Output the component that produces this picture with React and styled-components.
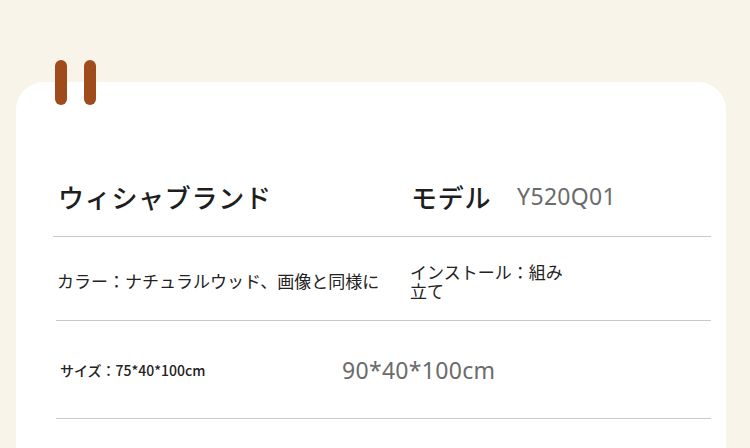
import styled, { createGlobalStyle } from 'styled-components';

const GlobalStyle = createGlobalStyle`
  html, body {
    margin: 0;
    padding: 0;
    background: #f9f4ea;
    overflow: hidden;
  }
  body {
    font-family: "Noto Sans CJK JP", "Noto Sans", sans-serif;
  }
`;

const Page = styled.div`
  width: 750px;
  height: 448px;
  padding: 82px 24px 0 16px;
  box-sizing: border-box;
  overflow: hidden;
`;

const Card = styled.section`
  position: relative;
  background: #ffffff;
  border-radius: 28px 28px 0 0;
  min-height: 400px;
  padding: 0 15px 0 37px;
`;

const Binder = styled.div`
  position: absolute;
  top: -22px;
  left: 39px;
  display: flex;
  gap: 17px;
`;

const Ring = styled.span`
  display: block;
  width: 12px;
  height: 45px;
  border-radius: 6px;
  background: #a04b1c;
`;

const Row = styled.div`
  display: flex;
  align-items: center;
  box-sizing: border-box;
  height: ${p => p.$h}px;
  padding-top: ${p => p.$pt || 0}px;
  padding-left: ${p => p.$pl}px;
  margin-left: ${p => p.$inset || 0}px;
  border-bottom: 1px solid #c9c9c9;
`;

const Cell = styled.div`
  display: flex;
  align-items: center;
  flex: 0 0 auto;
  width: ${p => (p.$w ? `${p.$w}px` : 'auto')};
`;

const Heading = styled.span`
  font-size: 26px;
  font-weight: 500;
  letter-spacing: 0.7px;
  color: #1e1e1e;
  line-height: 1.3;
`;

const Label = styled.span`
  font-size: ${p => p.$size}px;
  font-weight: ${p => p.$weight || 400};
  color: #222;
  line-height: ${p => p.$lh || 1.3};
`;

const Value = styled.span`
  font-family: "Noto Sans", sans-serif;
  font-size: 23px;
  font-weight: 400;
  letter-spacing: 0.3px;
  color: #6b6b6b;
  line-height: 1.3;
  margin-left: ${p => p.$ml || 0}px;
`;

export default function App() {
  return (
    <>
      <GlobalStyle />
      <Page>
        <Card>
          <Binder>
            <Ring />
            <Ring />
          </Binder>

          <Row $h={155} $pt={76} $pl={5}>
            <Cell $w={353}>
              <Heading>ウィシャブランド</Heading>
            </Cell>
            <Cell>
              <Heading>モデル</Heading>
              <Value $ml={26}>Y520Q01</Value>
            </Cell>
          </Row>

          <Row $h={84} $pt={6} $pl={1} $inset={3}>
            <Cell $w={353}>
              <Label $size={17}>カラー：ナチュラルウッド、画像と同様に</Label>
            </Cell>
            <Cell $w={160}>
              <Label $size={17} $lh={1.06}>インストール：組み立て</Label>
            </Cell>
          </Row>

          <Row $h={98} $pt={2} $pl={4} $inset={3}>
            <Cell $w={282}>
              <Label $size={14} $weight={500}>サイズ：75*40*100cm</Label>
            </Cell>
            <Cell>
              <Value>90*40*100cm</Value>
            </Cell>
          </Row>
        </Card>
      </Page>
    </>
  );
}
